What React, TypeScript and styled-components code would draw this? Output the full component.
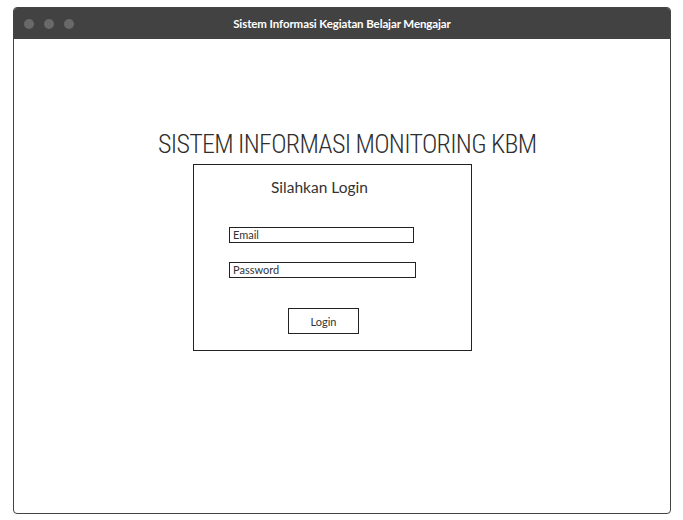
import React from "react";
import styled, { createGlobalStyle } from "styled-components";

const Global = createGlobalStyle`
  html, body { margin: 0; padding: 0; background: #ffffff; }
  body { font-family: "Lato", "Open Sans", sans-serif; }
  * { box-sizing: border-box; }
`;

const Page = styled.div`
  width: 683px;
  height: 520px;
  padding: 7px 12px 6px 13px;
`;

const Window = styled.div`
  width: 658px;
  height: 507px;
  border: 1px solid #444;
  border-radius: 4px;
  overflow: hidden;
  display: flex;
  flex-direction: column;
  background: #fff;
`;

const TitleBar = styled.div`
  height: 31px;
  background: #424242;
  display: grid;
  grid-template-columns: 80px 1fr 80px;
  align-items: center;
`;

const Dots = styled.div`
  display: flex;
  gap: 10px;
  padding-left: 10px;
`;

const Dot = styled.span`
  width: 10px;
  height: 10px;
  border-radius: 50%;
  background: #696969;
`;

const TitleText = styled.div`
  text-align: center;
  color: #fff;
  font-size: 11.5px;
  font-weight: 700;
  letter-spacing: -0.1px;
`;

const Body = styled.div`
  flex: 1;
  display: flex;
  flex-direction: column;
  padding-top: 88px;
`;

const Heading = styled.h1`
  margin: 0 0 0 144px;
  font-family: "Roboto Condensed", "Roboto", sans-serif;
  font-size: 26px;
  line-height: 34px;
  font-weight: 300;
  letter-spacing: -0.7px;
  color: #2e2e2e;
  white-space: nowrap;
`;

const LoginBox = styled.div`
  margin: 3px 0 0 179px;
  width: 279px;
  height: 187px;
  border: 1px solid #222;
  display: flex;
  flex-direction: column;
  align-items: flex-start;
  padding-left: 35px;
`;

const BoxTitle = styled.div`
  margin: 12px 0 0 42px;
  font-size: 15.5px;
  line-height: 20px;
  color: #333;
`;

const Field = styled.div<{ $w: number; $mt: number }>`
  width: ${(p) => p.$w}px;
  height: 16px;
  margin-top: ${(p) => p.$mt}px;
  border: 1px solid #222;
  font-size: 11px;
  line-height: 14px;
  padding-left: 3px;
  color: #333;
`;

const Button = styled.div`
  margin: 30px 0 0 59px;
  width: 71px;
  height: 26px;
  border: 1px solid #222;
  display: flex;
  align-items: center;
  justify-content: center;
  font-size: 11px;
  color: #333;
`;

export default function App() {
  return (
    <>
      <Global />
      <Page>
        <Window>
          <TitleBar>
            <Dots>
              <Dot />
              <Dot />
              <Dot />
            </Dots>
            <TitleText>Sistem Informasi Kegiatan Belajar Mengajar</TitleText>
            <div />
          </TitleBar>
          <Body>
            <Heading>SISTEM INFORMASI MONITORING KBM</Heading>
            <LoginBox>
              <BoxTitle>Silahkan Login</BoxTitle>
              <Field $w={185} $mt={30}>Email</Field>
              <Field $w={187} $mt={19}>Password</Field>
              <Button>Login</Button>
            </LoginBox>
          </Body>
        </Window>
      </Page>
    </>
  );
}
